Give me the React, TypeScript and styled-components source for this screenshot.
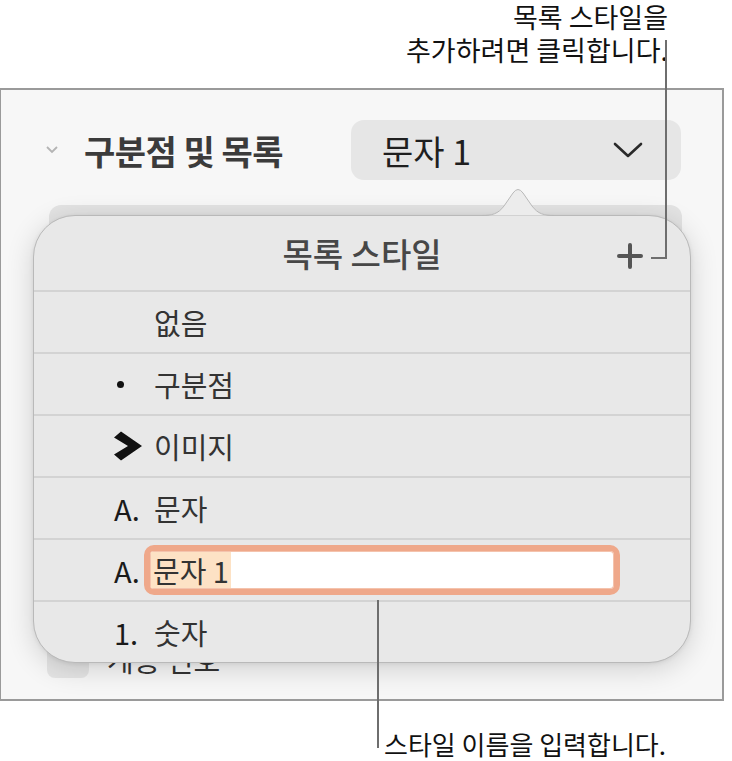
import React from 'react';
import styled, { createGlobalStyle } from 'styled-components';

const GlobalStyle = createGlobalStyle`
  html, body {
    margin: 0;
    padding: 0;
    background: #ffffff;
  }
  body {
    font-family: "Noto Sans CJK KR", "Noto Sans", sans-serif;
    color: #222;
  }
`;

const Page = styled.div`
  position: relative;
  width: 732px;
  height: 761px;
  background: #ffffff;
`;

const Note = styled.div<{ align: 'left' | 'right' }>`
  font-size: 27px;
  line-height: 33px;
  color: #111;
  text-align: ${p => p.align};
  white-space: nowrap;
`;

const NoteLine = styled.div`
  height: 33px;
`;

const TopNote = styled(Note)`
  padding: 0 64px 0 0;
  height: 88px;
  box-sizing: border-box;
`;

const BottomNote = styled(Note)`
  font-size: 26px;
  padding: 26px 0 0 384px;
`;

const Panel = styled.div`
  position: relative;
  box-sizing: border-box;
  width: 724px;
  height: 613px;
  border: 2px solid #9a9a9a;
  border-left-width: 1px;
  background: #f7f7f7;
  display: flex;
  flex-direction: column;
  padding: 30px 41px 21px 45px;
`;

const HeaderRow = styled.div`
  display: flex;
  align-items: center;
  justify-content: space-between;
  height: 60px;
`;

const SectionTitle = styled.div`
  display: flex;
  align-items: center;
  gap: 26px;
  font-size: 34px;
  font-weight: 700;
  color: #3b3b3b;
  letter-spacing: -0.5px;
`;

const Disclosure = styled.svg`
  width: 12px;
  height: 8px;
`;

const PopupButton = styled.div`
  box-sizing: border-box;
  width: 330px;
  height: 60px;
  border-radius: 13px;
  background: #e6e6e6;
  display: flex;
  align-items: center;
  justify-content: space-between;
  padding: 0 38px 0 31px;
  font-size: 34px;
  color: #1f1f1f;
`;

const HiddenControl = styled.div`
  margin: 25px -1px 0 3px;
  height: 60px;
  border-radius: 12px;
  background: #e3e3e3;
`;

const BottomRow = styled.div`
  margin-top: auto;
  display: flex;
  align-items: flex-end;
  gap: 18px;
  padding-left: 1px;
`;

const CheckBox = styled.div`
  width: 42px;
  height: 38px;
  border-radius: 8px;
  background: #e5e5e5;
`;

const BottomLabel = styled.div`
  font-size: 29px;
  line-height: 34px;
  color: #333;
  margin-bottom: 2px;
`;

/* popover over the panel */
const Popover = styled.div`
  position: absolute;
  left: 32px;
  top: 96px;
  width: 658px;
`;

const Caret = styled.svg`
  display: block;
  margin-left: 449px;
  width: 72px;
  height: 30px;
  margin-bottom: -1px;
  position: relative;
  z-index: 2;
`;

const PopoverBody = styled.div`
  box-sizing: border-box;
  background: #e8e8e8;
  border: 1px solid #b9b9b9;
  border-radius: 42px;
  box-shadow: 0 6px 28px rgba(0, 0, 0, 0.16), 0 1px 4px rgba(0, 0, 0, 0.08);
  overflow: hidden;
`;

const TitleRow = styled.div`
  position: relative;
  height: 76px;
  display: flex;
  align-items: center;
  justify-content: center;
  border-bottom: 2px solid #d3d3d3;
  font-size: 33px;
  font-weight: 500;
  color: #474747;
  box-sizing: border-box;
`;

const AddButton = styled.svg`
  position: absolute;
  right: 47px;
  top: 27px;
  width: 26px;
  height: 26px;
`;

const Row = styled.div<{ last?: boolean }>`
  box-sizing: border-box;
  height: ${p => (p.last ? 60 : 62)}px;
  display: flex;
  align-items: center;
  padding-left: 80px;
  border-bottom: ${p => (p.last ? 'none' : '2px solid #d3d3d3')};
  font-size: 29px;
  color: #333;
`;

const Marker = styled.div<{ width?: number }>`
  width: ${p => p.width ?? 40}px;
  flex: none;
  display: flex;
  align-items: center;
  color: #1a1a1a;
`;

const Bullet = styled.span`
  width: 7px;
  height: 7px;
  border-radius: 50%;
  background: #111;
  margin-left: 3px;
`;

const NameField = styled.div`
  box-sizing: border-box;
  width: 476px;
  height: 50px;
  border: 6px solid #efa88a;
  border-radius: 10px;
  background: #ffffff;
  display: flex;
  align-items: stretch;
  padding: 1px 0 1px 1px;
  box-shadow: inset 0 0 0 1px #f4c3ad;
`;

const Selected = styled.span`
  display: flex;
  align-items: center;
  background: #fde2c5;
  color: #333;
  padding: 0 2px 0 2px;
`;

const Leader = styled.div`
  position: absolute;
  border-color: #6e6e6e;
  border-style: solid;
  border-width: 0;
`;

const AddLeader = styled(Leader)`
  left: 651px;
  top: 40px;
  width: 14px;
  height: 217px;
  border-right-width: 2px;
  border-bottom-width: 2px;
`;

const FieldLeader = styled(Leader)`
  left: 377px;
  top: 600px;
  width: 5px;
  height: 148px;
  border-left-width: 2px;
`;

const rows: { marker: React.ReactNode; label: string }[] = [
  { marker: null, label: '없음' },
  { marker: <Bullet />, label: '구분점' },
  {
    marker: (
      <svg width="28" height="30" viewBox="0 0 28 30">
        <polygon points="0,6.5 7,0.5 28,15 7,29.5 0,23.5 14,15" fill="#111" />
      </svg>
    ),
    label: '이미지',
  },
  { marker: 'A.', label: '문자' },
];

export default function App() {
  return (
    <Page>
      <GlobalStyle />
      <TopNote align="right">
        <NoteLine>목록 스타일을</NoteLine>
        <NoteLine>추가하려면 클릭합니다.</NoteLine>
      </TopNote>

      <Panel>
        <HeaderRow>
          <SectionTitle>
            <Disclosure viewBox="0 0 12 8">
              <polyline points="1,1 6,6 11,1" fill="none" stroke="#b4b4b4" strokeWidth="1.8" />
            </Disclosure>
            구분점 및 목록
          </SectionTitle>
          <PopupButton>
            문자 1
            <svg width="30" height="18" viewBox="0 0 30 18">
              <polyline points="2,3 15,15 28,3" fill="none" stroke="#2a2a2a" strokeWidth="2.6" strokeLinecap="round" strokeLinejoin="round" />
            </svg>
          </PopupButton>
        </HeaderRow>
        <HiddenControl />
        <BottomRow>
          <CheckBox />
          <BottomLabel>계층 번호</BottomLabel>
        </BottomRow>

        <Popover>
          <Caret viewBox="0 0 72 30">
            <path
              d="M0,29.5 C10,29.5 16,28 22,20 L31,7 Q36,0 41,7 L50,20 C56,28 62,29.5 72,29.5"
              fill="#ececec"
              stroke="#b9b9b9"
              strokeWidth="1"
            />
          </Caret>
          <PopoverBody>
            <TitleRow>
              목록 스타일
              <AddButton viewBox="0 0 26 26">
                <path d="M13 2 V24 M2 13 H24" stroke="#555" strokeWidth="4" strokeLinecap="round" />
              </AddButton>
            </TitleRow>
            {rows.map(r => (
              <Row key={r.label}>
                <Marker>{r.marker}</Marker>
                {r.label}
              </Row>
            ))}
            <Row>
              <Marker width={30}>A.</Marker>
              <NameField>
                <Selected>문자 1</Selected>
              </NameField>
            </Row>
            <Row last>
              <Marker>1.</Marker>
              숫자
            </Row>
          </PopoverBody>
        </Popover>
      </Panel>

      <BottomNote align="left">스타일 이름을 입력합니다.</BottomNote>

      <AddLeader />
      <FieldLeader />
    </Page>
  );
}
